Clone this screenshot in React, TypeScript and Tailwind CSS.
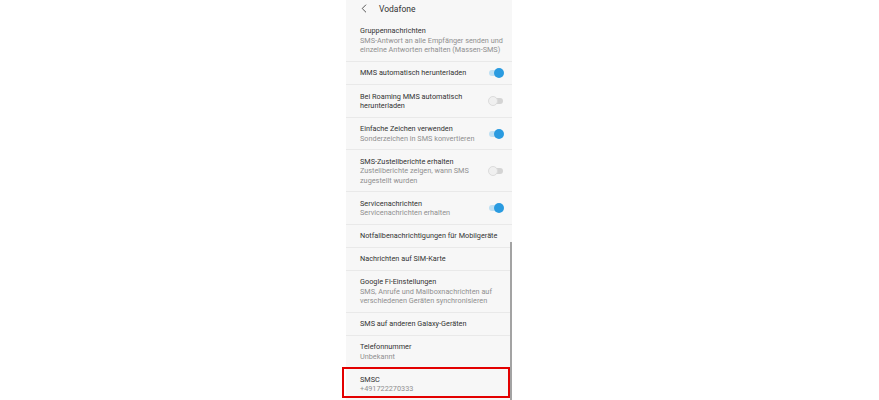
import React from "react";

type Row = { title: string; sub?: string; toggle?: "on" | "off" };

const rows: Row[] = [
  { title: "Gruppennachrichten", sub: "SMS-Antwort an alle Empfänger senden und einzelne Antworten erhalten (Massen-SMS)" },
  { title: "MMS automatisch herunterladen", toggle: "on" },
  { title: "Bei Roaming MMS automatisch herunterladen", toggle: "off" },
  { title: "Einfache Zeichen verwenden", sub: "Sonderzeichen in SMS konvertieren", toggle: "on" },
  { title: "SMS-Zustellberichte erhalten", sub: "Zustellberichte zeigen, wann SMS zugestellt wurden", toggle: "off" },
  { title: "Servicenachrichten", sub: "Servicenachrichten erhalten", toggle: "on" },
  { title: "Notfallbenachrichtigungen für Mobilgeräte" },
  { title: "Nachrichten auf SIM-Karte" },
  { title: "Google Fi-Einstellungen", sub: "SMS, Anrufe und Mailboxnachrichten auf verschiedenen Geräten synchronisieren" },
  { title: "SMS auf anderen Galaxy-Geräten" },
  { title: "Telefonnummer", sub: "Unbekannt" },
  { title: "SMSC", sub: "+491722270333" },
];

function Toggle({ on }: { on: boolean }) {
  return (
    <div className="relative w-[16px] h-[10px] shrink-0 flex items-center">
      <div className={`w-[13px] h-[6px] rounded-full ${on ? "bg-[#bfe0f3] ml-[1px]" : "bg-[#d4d4d4] ml-[2px]"}`} />
      <div
        className={`absolute top-0 w-[10px] h-[10px] rounded-full ${
          on ? "right-0 bg-[#2a9be0]" : "left-0 bg-[#f0f0f0] border border-[#dcdcdc]"
        }`}
      />
    </div>
  );
}

export default function App() {
  return (
    <div className="w-[879px] h-[400px] bg-white overflow-hidden relative" style={{ fontFamily: "Roboto, 'Noto Sans', sans-serif" }}>
      <div className="ml-[346px] w-[166px] h-[400px] bg-[#f7f7f7] relative">
        <div className="h-[19.5px] flex items-center pl-[15px]">
          <svg width="6" height="9" viewBox="0 0 6 9" className="mt-[-2px]">
            <path d="M5 0.7 L1.2 4.5 L5 8.3" fill="none" stroke="#444" strokeWidth="0.9" />
          </svg>
          <span className="ml-[12px] text-[8.5px] leading-none text-[#333] mt-[-2px]">Vodafone</span>
        </div>
        {rows.map((r, i) => (
          <div
            key={i}
            className={`flex items-center pl-[14px] pt-[6.5px] pb-[6px] border-b border-[#e9e9e9] ${r.toggle ? "pr-[8px]" : "pr-[4px]"}`}
          >
            <div className={`flex-1 min-w-0 ${r.toggle ? "pr-[6px]" : ""}`}>
              <div className="text-[7.3px] leading-[9.5px] text-[#333] whitespace-normal">{r.title}</div>
              {r.sub && <div className="text-[7.3px] leading-[9.5px] text-[#909090]">{r.sub}</div>}
            </div>
            {r.toggle && <Toggle on={r.toggle === "on"} />}
          </div>
        ))}
        <div className="absolute right-0 top-[242px] w-[2px] h-[158px] bg-[#a3a3a3]" />
      </div>
      <div className="absolute left-[342px] top-[367px] w-[168px] h-[31px] border-[2.5px] border-[#e30000]" />
    </div>
  );
}
